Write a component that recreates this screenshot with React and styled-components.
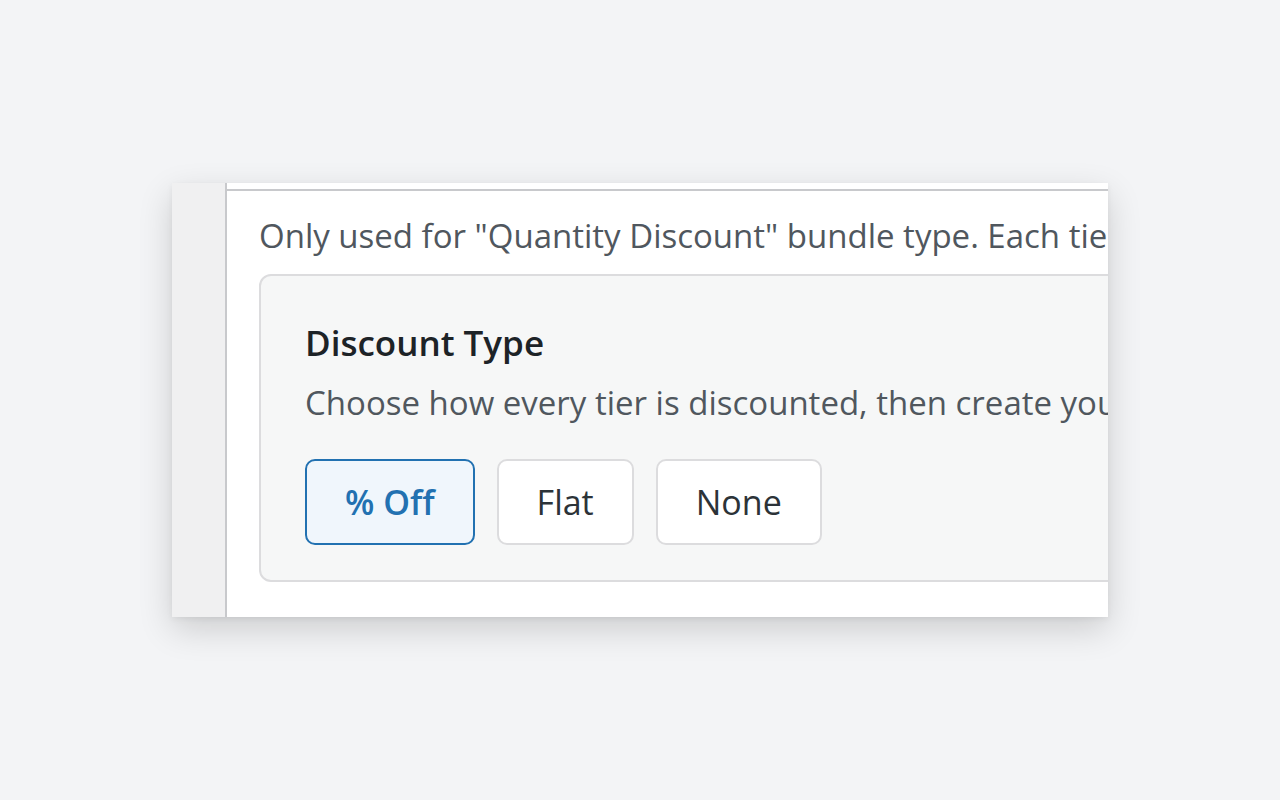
import React from 'react'
import styled, { createGlobalStyle } from 'styled-components'

const GlobalStyle = createGlobalStyle`
  html, body {
    margin: 0;
    padding: 0;
    background: #f3f4f6;
  }
  body {
    font-family: "Open Sans", "Noto Sans", "Liberation Sans", sans-serif;
  }
`

const Stage = styled.div`
  width: 1280px;
  height: 800px;
  display: flex;
  align-items: center;
  justify-content: center;
`

const Frame = styled.div`
  width: 936px;
  height: 434px;
  display: flex;
  overflow: hidden;
  background: #fff;
  box-shadow: 0 12px 32px rgba(0, 0, 0, 0.16), 0 2px 6px rgba(0, 0, 0, 0.06);
`

const Sidebar = styled.div`
  width: 53px;
  flex-shrink: 0;
  background: #f0f0f1;
  border-right: 2px solid #c8c9cc;
`

const Main = styled.div`
  flex: 1;
  min-width: 0;
  padding-top: 6px;
  background: #fff;
  overflow: hidden;
`

const Section = styled.div`
  border-top: 2px solid #c8c9cc;
  padding: 21px 0 0 32px;
`

const Note = styled.p`
  margin: 0 0 14px;
  font-size: 33px;
  line-height: 48px;
  color: #50575e;
  white-space: nowrap;
`

const Panel = styled.div`
  width: 1000px;
  box-sizing: border-box;
  padding: 43px 44px 35px;
  background: #f6f7f7;
  border: 2px solid #dcdcde;
  border-radius: 12px;
`

const Heading = styled.h3`
  margin: 0;
  font-size: 35px;
  line-height: 48px;
  font-weight: 600;
  color: #1d2327;
`

const Description = styled.p`
  margin: 12px 0 32px;
  font-size: 33px;
  line-height: 48px;
  color: #50575e;
  white-space: nowrap;
`

const Options = styled.div`
  display: flex;
  gap: 22px;
`

const Option = styled.button`
  height: 86px;
  padding: 0 38px;
  font-family: inherit;
  font-size: 34px;
  font-weight: ${p => (p.$active ? 600 : 400)};
  color: ${p => (p.$active ? '#2271b1' : '#2c3338')};
  background: ${p => (p.$active ? '#f0f6fc' : '#fff')};
  border: 2px solid ${p => (p.$active ? '#2271b1' : '#dcdcde')};
  border-radius: 10px;
  cursor: pointer;
`

const options = [
  { label: '% Off', active: true },
  { label: 'Flat' },
  { label: 'None' },
]

export default function App() {
  return (
    <>
      <GlobalStyle />
      <Stage>
        <Frame>
          <Sidebar />
          <Main>
            <Section>
              <Note>Only used for "Quantity Discount" bundle type. Each tier sets a quantity and its discount.</Note>
              <Panel>
                <Heading>Discount Type</Heading>
                <Description>Choose how every tier is discounted, then create your tiers below.</Description>
                <Options>
                  {options.map(o => (
                    <Option key={o.label} $active={o.active}>
                      {o.label}
                    </Option>
                  ))}
                </Options>
              </Panel>
            </Section>
          </Main>
        </Frame>
      </Stage>
    </>
  )
}
